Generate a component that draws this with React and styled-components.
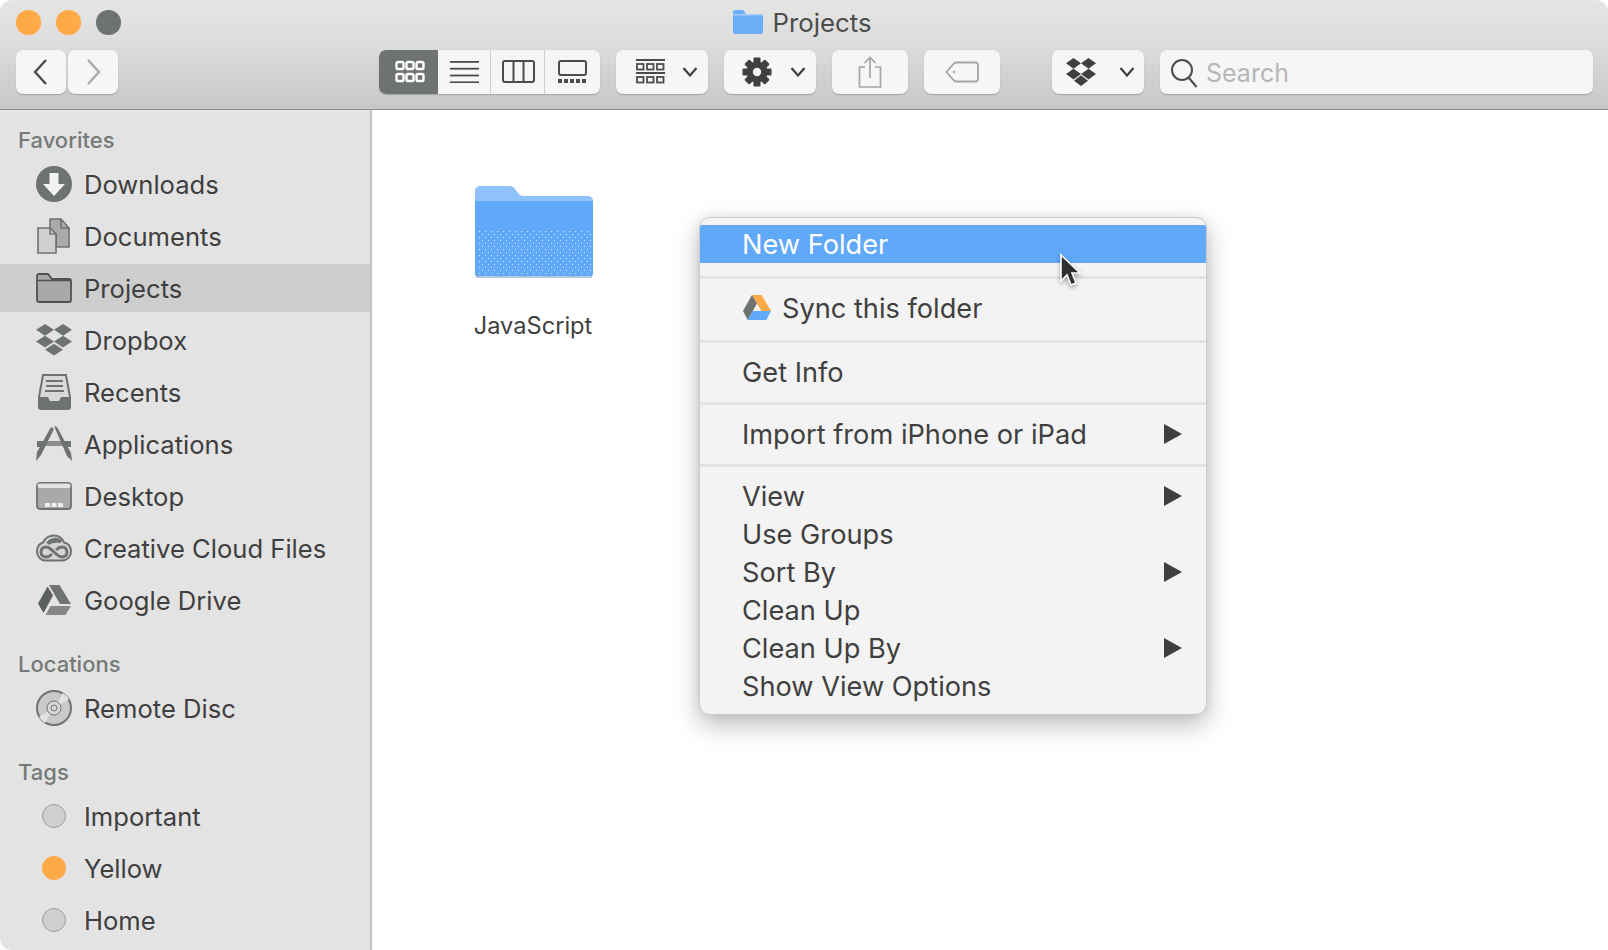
import React from 'react'
import styled, { createGlobalStyle } from 'styled-components'

const GlobalStyle = createGlobalStyle`
  html, body {
    margin: 0;
    height: 100%;
    background: #fdfdfd;
    overflow: hidden;
  }
  body {
    font-family: Inter, "Liberation Sans", sans-serif;
    color: #3f3f3f;
  }
`

const Finder = styled.div`
  width: 1608px;
  height: 950px;
  display: flex;
  flex-direction: column;
  position: relative;
  overflow: hidden;
  border-radius: 12px 12px 0 12px;
  background: #fff;
`

const Toolbar = styled.header`
  height: 110px;
  flex: none;
  box-sizing: border-box;
  border-bottom: 1px solid #8e8e8e;
  background: linear-gradient(#e5e5e5 0%, #dedede 35%, #c7c7c7 100%);
  display: flex;
  flex-direction: column;
`

const TitleRow = styled.div`
  height: 50px;
  flex: none;
  box-sizing: border-box;
  padding: 10px 16px 0;
  display: flex;
  align-items: flex-start;
  position: relative;
`

const Lights = styled.div`
  display: flex;
  gap: 15.5px;
`

const Light = styled.span`
  width: 24.5px;
  height: 24.5px;
  border-radius: 50%;
  background: ${(p) => p.$color};
`

const Title = styled.div`
  margin-left: 612px;
  display: flex;
  align-items: center;
  gap: 10px;
  height: 24px;
  font-size: 25.8px;
  color: #4b4d4b;
`

const ToolRow = styled.div`
  height: 44px;
  display: flex;
  padding-left: 16px;
`

const NavGroup = styled.div`
  display: flex;
  gap: 2px;
`

const ToolButton = styled.div`
  width: ${(p) => p.$width}px;
  height: 44px;
  box-sizing: border-box;
  margin-left: ${(p) => p.$left || 0}px;
  border-radius: 7px;
  background: #f6f6f6;
  box-shadow: 0 1px 1px #a3a3a3;
  display: flex;
  align-items: center;
  justify-content: ${(p) => (p.$split ? 'flex-start' : 'center')};
  padding-left: ${(p) => (p.$split ? p.$pad || 18 : 0)}px;
  gap: ${(p) => (p.$split ? p.$gap || 20 : 0)}px;
  flex: none;
`

const ViewGroup = styled.div`
  margin-left: 261px;
  width: 221px;
  height: 44px;
  display: flex;
  border-radius: 7px;
  overflow: hidden;
  background: #f6f6f6;
  box-shadow: 0 1px 1px #a3a3a3;
  flex: none;
`

const ViewCell = styled.div`
  width: ${(p) => p.$width}px;
  flex: none;
  display: flex;
  align-items: center;
  justify-content: center;
  padding-left: ${(p) => p.$shift || 0}px;
  background: ${(p) => (p.$active ? '#6f736f' : 'transparent')};
  border-right: ${(p) => (p.$divider ? '1px solid #d2d2d2' : 'none')};
  box-sizing: border-box;
`

const SearchBox = styled.div`
  width: 433px;
  height: 44px;
  margin-left: 16px;
  flex: none;
  box-sizing: border-box;
  padding: 2px 0 0 10px;
  border-radius: 7px;
  background: #f6f6f6;
  box-shadow: 0 1px 1px #a3a3a3;
  display: flex;
  align-items: center;
  gap: 8px;
  font-size: 25px;
  color: #b6b6b6;
`

const Body = styled.div`
  flex: 1;
  display: flex;
  min-height: 0;
`

const Sidebar = styled.aside`
  width: 372px;
  flex: none;
  box-sizing: border-box;
  padding-top: 14px;
  background: #e3e3e3;
  border-right: 2px solid #c2c2c2;
`

const SectionTitle = styled.div`
  height: 30px;
  line-height: 32px;
  margin: ${(p) => (p.$first ? 0 : 24)}px 0 6px 18px;
  font-size: 22px;
  font-weight: 500;
  color: #767a76;
`

const SidebarList = styled.div`
  display: flex;
  flex-direction: column;
  gap: 4px;
`

const SidebarRow = styled.div`
  height: 48px;
  display: flex;
  align-items: center;
  padding-left: 36px;
  background: ${(p) => (p.$selected ? '#cecece' : 'transparent')};
  font-size: 25.6px;
  color: #3f3f3f;
`

const RowIcon = styled.span`
  width: 36px;
  height: 36px;
  flex: none;
  margin-right: 12px;
  display: flex;
  align-items: center;
  justify-content: center;
`

const TagDot = styled.span`
  width: 24px;
  height: 24px;
  box-sizing: border-box;
  border-radius: 50%;
  background: ${(p) => p.$color};
  border: ${(p) => (p.$color === '#ffa947' ? 'none' : '1px solid #9b9b9b')};
`

const Content = styled.main`
  flex: 1;
  position: relative;
  background: #fff;
  padding: 75px 0 0 103px;
`

const FolderItem = styled.div`
  width: 118px;
  display: flex;
  flex-direction: column;
  align-items: center;
  gap: 33px;
  font-size: 23.6px;
  color: #3f3f3f;
`

const FolderLabel = styled.div`
  white-space: nowrap;
  line-height: 30px;
  padding-right: 2px;
`

const Menu = styled.div`
  position: absolute;
  left: 327px;
  top: 107px;
  width: 508px;
  height: 498px;
  box-sizing: border-box;
  border-radius: 11px;
  border: 1px solid #cbcbcb;
  background: #f3f3f3;
  box-shadow: 0 10px 26px rgba(0, 0, 0, 0.26), 0 0 10px rgba(0, 0, 0, 0.08);
  font-size: 27.2px;
  overflow: hidden;
`

const MenuGroup = styled.div`
  padding: ${(p) => p.$top ?? 10}px 0 ${(p) => p.$bottom ?? 12}px;
  border-bottom: ${(p) => (p.$last ? 'none' : '3px solid #e3e3e3')};
`

const MenuRow = styled.div`
  height: 38px;
  display: flex;
  align-items: center;
  padding: 0 24px 0 42px;
  background: ${(p) => (p.$active ? '#60a8f8' : 'transparent')};
  color: ${(p) => (p.$active ? '#ffffff' : '#3f3f3f')};
`

const MenuLabel = styled.span`
  flex: 1;
  white-space: nowrap;
`

const DriveMark = styled.span`
  width: 28px;
  height: 26px;
  margin: 0 11px 0 1px;
  flex: none;
  display: flex;
`

const Arrow = styled.span`
  width: 0;
  height: 0;
  border-left: 18px solid #3f3f3f;
  border-top: 10px solid transparent;
  border-bottom: 10px solid transparent;
`

const Pointer = styled.svg`
  position: absolute;
  left: 1058px;
  top: 253px;
  filter: drop-shadow(0 2px 2px rgba(0, 0, 0, 0.35));
`

const G = '#6f736f'

const BlueFolder = ({ w, h }) => (
  <svg width={w} height={h} viewBox="0 0 118 93">
    <defs>
      <pattern id="dots" width="6" height="6" patternUnits="userSpaceOnUse">
        <rect x="1" y="1" width="1" height="1" fill="#dcecff" />
        <rect x="4" y="4" width="1" height="1" fill="#dcecff" />
      </pattern>
    </defs>
    <path d="M0 6a5 5 0 0 1 5-5h29c3 0 5 1 6 3l3 4c1 2 3 3 6 3h64a5 5 0 0 1 5 5v72a4 4 0 0 1-4 4H4a4 4 0 0 1-4-4z" fill="#8fc1fa" />
    <path d="M0 16h118v72a4 4 0 0 1-4 4H4a4 4 0 0 1-4-4z" fill="#60a8f8" />
    <rect x="2" y="46" width="114" height="45" fill="url(#dots)" />
    <rect x="1" y="91" width="116" height="2" fill="#b4c6dc" />
  </svg>
)

const TitleFolder = () => (
  <svg width="30" height="24" viewBox="0 0 30 24">
    <path d="M0 2a2 2 0 0 1 2-2h8l3 4h15a2 2 0 0 1 2 2v16a2 2 0 0 1-2 2H2a2 2 0 0 1-2-2z" fill="#6aaef8" />
    <rect x="0" y="4" width="30" height="1.5" fill="#a6cdfb" />
  </svg>
)

const Chevron = ({ dir, color }) => (
  <svg width="18" height="30" viewBox="0 0 18 30">
    <path d={dir === 'left' ? 'M14 3 3 15l11 12' : 'M4 3l11 12L4 27'} fill="none" stroke={color} strokeWidth="2.4" />
  </svg>
)

const SmallChevron = () => (
  <svg width="16" height="10" viewBox="0 0 16 10">
    <path d="M1.5 1 8 8.5 14.5 1" fill="none" stroke="#3f3f3f" strokeWidth="2.2" />
  </svg>
)

const IconGridView = ({ color }) => (
  <svg width="30" height="24" viewBox="0 0 30 24" fill="none" stroke={color} strokeWidth="2.4">
    {[0, 1].map((r) =>
      [0, 1, 2].map((c) => <rect key={`${r}${c}`} x={1.5 + c * 10} y={2 + r * 12} width="7" height="7" rx="1.6" />)
    )}
  </svg>
)

const IconListView = () => (
  <svg width="30" height="22" viewBox="0 0 30 22" fill="#4a4c4a">
    {[0, 1, 2, 3].map((i) => <rect key={i} y={i * 6.8} x="0" width="29" height="1.8" />)}
  </svg>
)

const IconColumnView = () => (
  <svg width="33" height="24" viewBox="0 0 33 24" fill="none" stroke="#4a4c4a" strokeWidth="2">
    <rect x="1" y="1" width="31" height="21" rx="2" />
    <path d="M11.5 1v21M21.5 1v21" />
  </svg>
)

const IconGalleryView = () => (
  <svg width="29" height="24" viewBox="0 0 29 24">
    <rect x="1" y="1" width="27" height="14" rx="2" fill="none" stroke="#4a4c4a" strokeWidth="2" />
    {[0, 1, 2, 3, 4].map((i) => <rect key={i} x={i * 6} y="19" width="4" height="4" fill="#4a4c4a" />)}
  </svg>
)

const IconGroupBy = () => (
  <svg width="29" height="26" viewBox="0 0 29 26" fill="none" stroke="#4a4c4a" strokeWidth="1.8">
    <path d="M0 1h29M0 14h29" strokeWidth="2" />
    <rect x="1" y="5" width="6.5" height="5.5" />
    <rect x="11" y="5" width="6.5" height="5.5" />
    <rect x="21" y="5" width="6.5" height="5.5" />
    <rect x="1" y="18" width="6.5" height="5.5" />
    <rect x="11" y="18" width="6.5" height="5.5" />
    <rect x="21" y="18" width="6.5" height="5.5" />
  </svg>
)

const IconGear = () => (
  <svg width="30" height="30" viewBox="0 0 30 30">
    <g fill="#3f413f">
      {[0, 45, 90, 135].map((a) => (
        <rect key={a} x="11.5" y="0.5" width="7" height="29" rx="1" transform={`rotate(${a} 15 15)`} />
      ))}
      <circle cx="15" cy="15" r="10.5" />
    </g>
    <circle cx="15" cy="15" r="4.2" fill="#f6f6f6" />
  </svg>
)

const IconShare = () => (
  <svg width="26" height="32" viewBox="0 0 26 32" fill="none" stroke="#a5a5a5" strokeWidth="1.7">
    <path d="M8 11H2.5v20h21V11H18" />
    <path d="M13 22V1.5M7.5 7 13 1.5 18.5 7" />
  </svg>
)

const IconTag = () => (
  <svg width="34" height="22" viewBox="0 0 34 22" fill="none" stroke="#a5a5a5" strokeWidth="1.8">
    <path d="M10 1.5h20a3 3 0 0 1 3 3v13a3 3 0 0 1-3 3H10L1.5 11z" />
    <circle cx="9" cy="11" r="1.2" fill="#a5a5a5" stroke="none" />
  </svg>
)

const DropboxShape = ({ size, color }) => (
  <svg width={size} height={size * 0.9} viewBox="0 0 40 36" fill={color}>
    <path d="M10 0 20 6.5 10 13 0 6.5z" />
    <path d="M30 0 40 6.5 30 13 20 6.5z" />
    <path d="M10 13 20 19.5 10 26 0 19.5z" />
    <path d="M30 13 40 19.5 30 26 20 19.5z" />
    <path d="M20 22 30 28.5 20 35 10 28.5z" />
  </svg>
)

const IconToolbarDropbox = () => (
  <svg width="30" height="28" viewBox="0 0 30 34" preserveAspectRatio="none" fill="#3f413f">
    <path d="M7.5 0 15 6.5 7.5 13 0 6.5z" />
    <path d="M22.5 0 30 6.5 22.5 13 15 6.5z" />
    <path d="M7.5 13 15 19.5 7.5 26 0 19.5z" />
    <path d="M22.5 13 30 19.5 22.5 26 15 19.5z" />
    <path d="M15 21 22 27.5 15 34 8 27.5z" />
  </svg>
)

const IconSearch = () => (
  <svg width="28" height="30" viewBox="0 0 28 30" fill="none" stroke="#4a4c4a" strokeWidth="2">
    <circle cx="12" cy="12" r="10" />
    <path d="m19 20 7.5 9" />
  </svg>
)

const IconDownloads = () => (
  <svg width="36" height="36" viewBox="0 0 36 36">
    <circle cx="18" cy="18" r="18" fill={G} />
    <path d="M13.5 7h9v11H29L18 30 7 18h6.5z" fill="#f2f2f2" />
  </svg>
)

const IconDocuments = () => (
  <svg width="34" height="36" viewBox="0 0 34 36" stroke={G} strokeWidth="1.6">
    <path d="M13 1h11l8 9v19H19V16l-6-6z" fill="#a9aba9" />
    <path d="M1 10h12l6 6v19H1z" fill="#d0d0d0" />
    <path d="M24 1v9h8" fill="none" />
    <path d="M13 10v6h6" fill="none" />
  </svg>
)

const IconFolder = () => (
  <svg width="36" height="30" viewBox="0 0 36 30">
    <path d="M1 7V3a2 2 0 0 1 2-2h9l4 5h17a2 2 0 0 1 2 2v19a2 2 0 0 1-2 2H3a2 2 0 0 1-2-2z" fill="#a9a9a9" stroke="#505250" strokeWidth="1.8" />
    <path d="M1 7.5h34" stroke="#505250" strokeWidth="1.6" />
  </svg>
)

const IconRecents = () => (
  <svg width="33" height="36" viewBox="0 0 33 36">
    <path d="M5 1h23l4 22v10a2 2 0 0 1-2 2H3a2 2 0 0 1-2-2V23z" fill="#d9d9d9" stroke={G} strokeWidth="2" />
    <path d="M1 23h9l2 4h9l2-4h9v10a2 2 0 0 1-2 2H3a2 2 0 0 1-2-2z" fill={G} />
    <path d="M8 7h17M8 12h17M7 17h19" stroke={G} strokeWidth="2" />
  </svg>
)

const IconApplications = () => (
  <svg width="36" height="36" viewBox="0 0 36 36">
    <path d="M1 15h10l-2 6H1zM25 15h10v6h-8z" fill={G} />
    <path d="M11 15h14l2 5H9z" fill="#8c8f8c" />
    <path d="M15 1 18 3 5 29 0 35l1-9z" fill={G} />
    <path d="M18 0 21 1l14 26 1 8-5-5z" fill={G} />
  </svg>
)

const IconDesktop = () => (
  <svg width="36" height="28" viewBox="0 0 36 28">
    <rect x="1" y="1" width="34" height="26" rx="3" fill="#a9a9a9" stroke={G} strokeWidth="1.8" />
    <rect x="1.5" y="1.5" width="33" height="4.5" rx="2" fill="#e3e3e3" />
    <rect x="9" y="21" width="5" height="4" fill="#eee" />
    <rect x="15.5" y="21" width="5" height="4" fill="#eee" />
    <rect x="22" y="21" width="5" height="4" fill="#eee" />
  </svg>
)

const IconCreativeCloud = () => (
  <svg width="36" height="28" viewBox="0 0 36 28" fill="none" stroke={G}>
    <path d="M9 26.5h17c5 0 9-4 9-9 0-5-3-8-7-9-2-5-6-7-10-7-5 0-9 3-11 7-3 1-6 4-6 9s4 9 8 9z" fill="#d5d5d5" strokeWidth="2" />
    <path d="M16 20c-2 2-4 3-6 3-3 0-5-2-5-5s2-5 5-5c6 0 10 10 16 10 3 0 5-2 5-5s-2-5-5-5c-2 0-4 1-6 3" strokeWidth="3" />
    <path d="M12 10c2-4 9-6 13-2" fill={G} strokeWidth="4" />
  </svg>
)

const IconDrive = () => (
  <svg width="33" height="30" viewBox="0 0 33 30" fill={G}>
    <path d="M11 0h10.5L33 19H22z" />
    <path d="M9.6 1.5 15 10.5 5.5 28 0 18.5z" fill="#5c605c" />
    <path d="M7.5 30h20L33 21H12.5z" fill="#858885" />
  </svg>
)

const IconDisc = () => (
  <svg width="36" height="36" viewBox="0 0 36 36">
    <circle cx="18" cy="18" r="17" fill="#c9c9c9" stroke={G} strokeWidth="2" />
    <path d="M18 18 27 3a17 17 0 0 1 6 6zM18 18 9 33a17 17 0 0 1-6-6z" fill="#e2e2e2" />
    <circle cx="18" cy="18" r="7" fill="#d8d8d8" stroke={G} strokeWidth="1" />
    <circle cx="18" cy="18" r="3" fill="none" stroke={G} strokeWidth="1" />
  </svg>
)

const DriveColor = () => (
  <svg width="28" height="26" viewBox="0 0 28 26">
    <path d="M9 0h9.5L28 16h-9.5z" fill="#ffa947" />
    <path d="M9 0 0 16l4.7 9L14 8.5z" fill="#6f736f" />
    <path d="M9.5 16H28l-4.7 9H4.7z" fill="#60a8f8" />
  </svg>
)

const favorites = [
  { label: 'Downloads', icon: <IconDownloads /> },
  { label: 'Documents', icon: <IconDocuments /> },
  { label: 'Projects', icon: <IconFolder />, selected: true },
  { label: 'Dropbox', icon: <DropboxShape size={36} color={G} /> },
  { label: 'Recents', icon: <IconRecents /> },
  { label: 'Applications', icon: <IconApplications /> },
  { label: 'Desktop', icon: <IconDesktop /> },
  { label: 'Creative Cloud Files', icon: <IconCreativeCloud /> },
  { label: 'Google Drive', icon: <IconDrive /> },
]

const tags = [
  { label: 'Important', color: '#cfcfcf' },
  { label: 'Yellow', color: '#ffa947' },
  { label: 'Home', color: '#cfcfcf' },
]

const viewItems = [
  { label: 'View', sub: true },
  { label: 'Use Groups' },
  { label: 'Sort By', sub: true },
  { label: 'Clean Up' },
  { label: 'Clean Up By', sub: true },
  { label: 'Show View Options' },
]

const App = () => {
  return (
    <Finder>
      <GlobalStyle />
      <Toolbar>
        <TitleRow>
          <Lights>
            <Light $color="#ffa947" />
            <Light $color="#ffa947" />
            <Light $color="#6f736f" />
          </Lights>
          <Title>
            <TitleFolder />
            Projects
          </Title>
        </TitleRow>
        <ToolRow>
          <NavGroup>
            <ToolButton $width={50}><Chevron dir="left" color="#4a4c4a" /></ToolButton>
            <ToolButton $width={50}><Chevron dir="right" color="#a9a9a9" /></ToolButton>
          </NavGroup>
          <ViewGroup>
            <ViewCell $width={59} $active $shift={3}><IconGridView color="#ffffff" /></ViewCell>
            <ViewCell $width={53} $divider $shift={2}><IconListView /></ViewCell>
            <ViewCell $width={54} $divider $shift={2}><IconColumnView /></ViewCell>
            <ViewCell $width={55}><IconGalleryView /></ViewCell>
          </ViewGroup>
          <ToolButton $width={92} $left={16} $split $pad={20} $gap={17}><IconGroupBy /><SmallChevron /></ToolButton>
          <ToolButton $width={92} $left={16} $split $gap={18}><IconGear /><SmallChevron /></ToolButton>
          <ToolButton $width={76} $left={16}><IconShare /></ToolButton>
          <ToolButton $width={76} $left={16}><IconTag /></ToolButton>
          <ToolButton $width={92} $left={52} $split $pad={14} $gap={23}><IconToolbarDropbox /><SmallChevron /></ToolButton>
          <SearchBox>
            <IconSearch />
            Search
          </SearchBox>
        </ToolRow>
      </Toolbar>
      <Body>
        <Sidebar>
          <SectionTitle $first>Favorites</SectionTitle>
          <SidebarList>
            {favorites.map((item) => (
              <SidebarRow key={item.label} $selected={item.selected}>
                <RowIcon>{item.icon}</RowIcon>
                {item.label}
              </SidebarRow>
            ))}
          </SidebarList>
          <SectionTitle>Locations</SectionTitle>
          <SidebarList>
            <SidebarRow>
              <RowIcon><IconDisc /></RowIcon>
              Remote Disc
            </SidebarRow>
          </SidebarList>
          <SectionTitle>Tags</SectionTitle>
          <SidebarList>
            {tags.map((tag) => (
              <SidebarRow key={tag.label}>
                <RowIcon><TagDot $color={tag.color} /></RowIcon>
                {tag.label}
              </SidebarRow>
            ))}
          </SidebarList>
        </Sidebar>
        <Content>
          <FolderItem>
            <BlueFolder w={118} h={93} />
            <FolderLabel>JavaScript</FolderLabel>
          </FolderItem>
          <Menu>
            <MenuGroup $top={7} $bottom={13}>
              <MenuRow $active><MenuLabel>New Folder</MenuLabel></MenuRow>
            </MenuGroup>
            <MenuGroup $bottom={13}>
              <MenuRow>
                <DriveMark><DriveColor /></DriveMark>
                <MenuLabel>Sync this folder</MenuLabel>
              </MenuRow>
            </MenuGroup>
            <MenuGroup $bottom={11}>
              <MenuRow><MenuLabel>Get Info</MenuLabel></MenuRow>
            </MenuGroup>
            <MenuGroup $bottom={11}>
              <MenuRow><MenuLabel>Import from iPhone or iPad</MenuLabel><Arrow /></MenuRow>
            </MenuGroup>
            <MenuGroup $last>
              {viewItems.map((item) => (
                <MenuRow key={item.label}>
                  <MenuLabel>{item.label}</MenuLabel>
                  {item.sub && <Arrow />}
                </MenuRow>
              ))}
            </MenuGroup>
          </Menu>
        </Content>
      </Body>
      <Pointer width="24" height="36" viewBox="0 0 24 36">
        <path d="M3 2v26l6-6 4 10 5-2-4-10h8z" fill="#2f2f2f" stroke="#fff" strokeWidth="1.6" />
      </Pointer>
    </Finder>
  )
}

export default App
